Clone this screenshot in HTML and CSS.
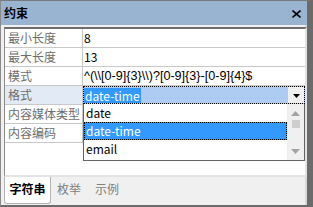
FILE: index.html
```html
<!DOCTYPE html>
<html>
<head>
<meta charset="utf-8">
<link rel="stylesheet" href="styles.css">
</head>
<body>
<div class="win">
  <div class="titlebar">
    <span class="title">约束</span>
    <svg class="close" width="9" height="8" viewBox="0 0 9 8"><path d="M0.5 0.5 L8.5 7.5 M8.5 0.5 L0.5 7.5" stroke="#000" stroke-width="1.6"/></svg>
  </div>
  <div class="body">
    <div class="grid">
      <div class="row"><div class="lab">最小长度</div><div class="val">8</div></div>
      <div class="row"><div class="lab">最大长度</div><div class="val">13</div></div>
      <div class="row"><div class="lab">模式</div><div class="val mono">^(\\[0-9]{3}\\)?[0-9]{3}-[0-9]{4}$</div></div>
      <div class="row sel"><div class="lab">格式</div><div class="val combo"><span class="seltext">date-time</span><span class="dbtn"><svg width="7" height="4" viewBox="0 0 7 4"><path d="M0 0 H7 L3.5 4 Z" fill="#000"/></svg></span></div></div>
      <div class="row"><div class="lab">内容媒体类型</div><div class="val"></div></div>
      <div class="row"><div class="lab">内容编码</div><div class="val"></div></div>
      <div class="list">
        <div class="items">
          <div class="item">date</div>
          <div class="item hi">date-time</div>
          <div class="item">email</div>
        </div>
        <div class="sb">
          <svg class="arr" width="9" height="5" viewBox="0 0 9 5"><path d="M0 5 L4.5 0 L9 5 Z" fill="#a3a3a3"/></svg>
          <div class="thumb"></div>
          <svg class="arr down" width="9" height="5" viewBox="0 0 9 5"><path d="M0 0 L9 0 L4.5 5 Z" fill="#a3a3a3"/></svg>
        </div>
      </div>
    </div>
    <div class="tabs">
      <div class="tab active">字符串</div>
      <div class="tab">枚举</div>
      <div class="tab">示例</div>
    </div>
  </div>
</div>
</body>
</html>
```
FILE: styles.css
```css
* { box-sizing: border-box; }
body { margin: 0; font-family: "Noto Sans CJK SC", "Noto Sans", sans-serif; font-size: 12px; }
.win {
  width: 313px; height: 207px;
  background: #f0f0f0;
  border-left: 1px solid #8a8a8a;
  border-top: 1px solid #7a7a7a;
  border-right: 6px solid #6b6b6b;
  border-bottom: 2px solid #6b6b6b;
  display: flex; flex-direction: column;
  box-shadow: inset -2px 0 0 #d8d8d8;
}
.titlebar {
  height: 24px; background: #99b4d1;
  display: flex; align-items: center; justify-content: space-between;
  padding: 0 6px 0 3px;
}
.title { font-weight: bold; font-size: 12px; color: #000; line-height: 14px; }
.close { display: block; margin-top: 1px; }
.body { flex: 1; display: flex; flex-direction: column; padding: 2px 0 0 3px; }
.grid {
  position: relative;
  width: 303px; height: 150px;
  background: #fff;
  border-style: solid; border-width: 2px 2px 2px 1px;
  border-color: #6e6e6e #e3e3e3 #e3e3e3 #8a8a8a;
}
.row { display: flex; height: 19px; border-bottom: 1px solid #c8c8c8; }
.lab {
  width: 78px; border-right: 1px solid #c8c8c8;
  color: #6d6d6d; padding-left: 3px; line-height: 18px; white-space: nowrap; overflow: hidden;
}
.val { flex: 1; padding-left: 1px; line-height: 18px; color: #000; white-space: nowrap; overflow: hidden; }
.mono { font-family: "Liberation Sans", sans-serif; font-size: 12.6px; }
.sel .lab { background: #e1eaf5; }
.combo {
  background: #aecbf1; border: 1px dotted #000; padding-left: 0;
  display: flex; align-items: center; position: relative; line-height: 16px;
}
.seltext { background: #3399ff; color: #fff; padding: 0 1px; height: 15px; line-height: 15px; }
.dbtn {
  position: absolute; right: 0; top: 0; width: 16px; height: 17px;
  background: #f0f0f0; display: flex; align-items: center; justify-content: center;
}
.list {
  position: absolute; left: 78px; top: 75px; width: 222px; height: 57px;
  background: #fff; border: 1px solid #646464; border-top: none;
  display: flex;
}
.items { flex: 1; }
.item { height: 18px; line-height: 17px; padding-left: 2px; color: #000; }
.item.hi { background: #3399ff; color: #fff; border: 1px dotted #000; padding-left: 1px; line-height: 15px; }
.sb { width: 17px; background: #f0f0f0; display: flex; flex-direction: column; align-items: center; padding-top: 7px; }
.thumb { width: 8px; height: 8px; background: #cdcdcd; margin-top: 4px; }
.arr.down { margin-top: auto; margin-bottom: 6px; }
.tabs { display: flex; height: 27px; }
.tab { padding: 0 7px; line-height: 24px; color: #808080; font-size: 12px; }
.tab.active {
  width: 47px; background: #fff; color: #000; font-weight: bold;
  border: 1px solid #b4b4b4; border-top: none; border-radius: 0 0 3px 3px;
  text-align: center; padding: 0; margin-right: -1px;
}
```
